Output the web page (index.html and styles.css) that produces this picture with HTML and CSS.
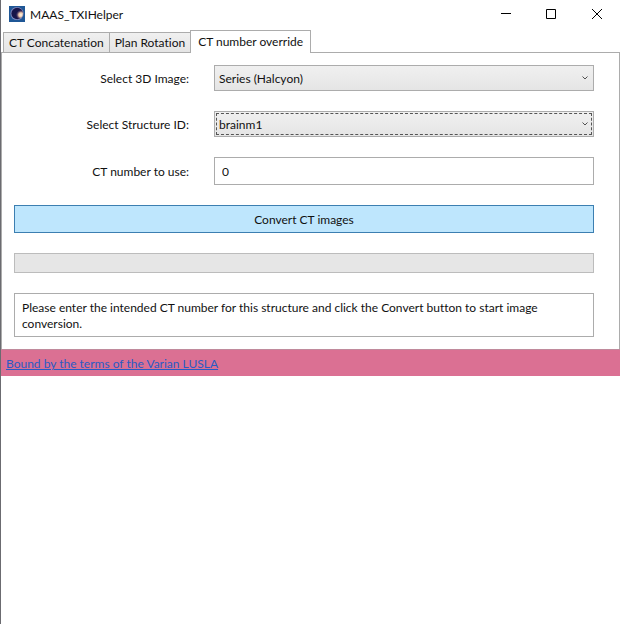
FILE: index.html
```html
<!DOCTYPE html>
<html lang="en">
<head>
<meta charset="utf-8">
<title>MAAS_TXIHelper</title>
<link rel="stylesheet" href="styles.css">
</head>
<body>
<div class="window">
  <header class="titlebar">
    <svg class="app-icon" viewBox="0 0 16 16" aria-hidden="true">
      <defs>
        <radialGradient id="glow" cx="0.82" cy="0.62" r="0.42">
          <stop offset="0" stop-color="#fff6e6"/>
          <stop offset="0.45" stop-color="#e8c4a8"/>
          <stop offset="0.75" stop-color="#5a4468"/>
          <stop offset="1" stop-color="#17154a"/>
        </radialGradient>
      </defs>
      <rect width="16" height="16" fill="#1f5796"/>
      <circle cx="8" cy="7.500" r="6.6" fill="#8088bd"/>
      <circle cx="8.2" cy="7.500" r="5.8" fill="url(#glow)"/>
    </svg>
    <h1 class="title">MAAS_TXIHelper</h1>
    <div class="window-controls">
      <button class="window-button" type="button" aria-label="Minimize">
        <svg viewBox="0 0 10 10" aria-hidden="true"><path d="M1 4.5H11"/></svg>
      </button>
      <button class="window-button" type="button" aria-label="Maximize">
        <svg viewBox="0 0 10 10" aria-hidden="true"><path d="M.5 .5H9.5V9.5H.5Z"/></svg>
      </button>
      <button class="window-button" type="button" aria-label="Close">
        <svg viewBox="0 0 10 10" aria-hidden="true"><path d="M0 0L10 10M10 0L0 10"/></svg>
      </button>
    </div>
  </header>

  <div class="tabs" role="tablist">
    <button class="tab" type="button" role="tab" aria-selected="false">CT Concatenation</button>
    <button class="tab" type="button" role="tab" aria-selected="false">Plan Rotation</button>
    <button class="tab tab-active" type="button" role="tab" aria-selected="true" id="tab-override" aria-controls="panel">CT number override</button>
  </div>

  <form class="panel" id="panel" role="tabpanel" aria-labelledby="tab-override">
    <div class="field">
      <label for="image">Select 3D Image:</label>
      <div class="combo">
        <select id="image"><option>Series (Halcyon)</option></select>
        <svg class="chevron" viewBox="0 0 6 4" aria-hidden="true"><path d="M.5 .5L3 3L5.500 .5"/></svg>
      </div>
    </div>
    <div class="field">
      <label for="structure">Select Structure ID:</label>
      <div class="combo combo-focused">
        <select id="structure"><option>brainm1</option></select>
        <svg class="chevron" viewBox="0 0 6 4" aria-hidden="true"><path d="M.5 .5L3 3L5.500 .5"/></svg>
      </div>
    </div>
    <div class="field">
      <label for="number">CT number to use:</label>
      <input class="number" id="number" type="text" value="0">
    </div>
    <button class="convert" type="button">Convert CT images</button>
    <progress class="progress" value="0" max="100" aria-label="Conversion progress"></progress>
    <textarea class="message" rows="2" readonly aria-label="Status message">Please enter the intended CT number for this structure and click the Convert button to start image conversion.</textarea>
  </form>

  <footer class="footer"><a href="#">Bound by the terms of the Varian LUSLA</a></footer>
</div>
</body>
</html>
```
FILE: styles.css
```css
* {
  box-sizing: border-box;
}

body {
  margin: 0;
  background: #fff;
}

body,
button,
input,
select,
textarea {
  color: #111;
  font-family: Lato, "Segoe UI", sans-serif;
  font-size: 12px;
  font-variant-ligatures: none;
  line-height: 16px;
}

.window {
  min-height: 100vh;
  border-left: 1px solid #6b6b70;
}

.titlebar {
  display: flex;
  align-items: flex-start;
  height: 30px;
  padding-left: 8px;
}

.app-icon {
  width: 16px;
  height: 16px;
  margin-top: 6px;
}

.title {
  flex: 1;
  margin: 7px 0 0 5px;
  font-size: 12px;
  font-weight: 400;
}

.window-controls {
  display: flex;
}

.window-button {
  display: flex;
  align-items: center;
  justify-content: center;
  width: 46px;
  height: 28px;
  padding: 0;
  border: 0;
  background: none;
}

.window-button svg {
  width: 10px;
  height: 10px;
  overflow: visible;
  fill: none;
  stroke: #000;
}

.tabs {
  display: flex;
  align-items: flex-end;
  padding-left: 2px;
}

.tab {
  height: 20px;
  margin-right: -1px;
  padding: 1px 5px 0;
  border: 1px solid #acacac;
  border-bottom: 0;
  background: linear-gradient(#f0f0f0, #e5e5e5);
}

.tab-active {
  z-index: 1;
  height: 23px;
  margin-bottom: -1px;
  padding: 0 7px;
  background: #fff;
}

.panel {
  display: flex;
  flex-direction: column;
  gap: 20px;
  padding: 12px 25px 12px 12px;
  border: 1px solid #acacac;
  border-bottom: 0;
}

.field {
  display: grid;
  grid-template-columns: 175px 1fr;
  gap: 25px;
  align-items: center;
}

.field label {
  padding-top: 1px;
  text-align: right;
}

.combo {
  position: relative;
  display: flex;
}

.combo select {
  width: 100%;
  height: 26px;
  padding: 2px 20px 0 4px;
  appearance: none;
  border: 1px solid #acacac;
  border-radius: 0;
  background: linear-gradient(#f0f0f0, #e5e5e5);
}

.combo-focused select {
  outline: 1px dashed #555;
  outline-offset: -3px;
}

.chevron {
  position: absolute;
  top: 11px;
  right: 6px;
  width: 6px;
  height: 4px;
  fill: none;
  stroke: #505050;
  pointer-events: none;
}

.number {
  width: 100%;
  height: 28px;
  padding: 0 7px;
  border: 1px solid #acacac;
}

.convert {
  height: 28px;
  padding: 2px 0 0;
  border: 1px solid #3c7fb1;
  background: #bee6fd;
}

.progress {
  width: 100%;
  height: 20px;
  appearance: none;
  border: 1px solid #bcbcbc;
  background: #e6e6e6;
}

.progress::-webkit-progress-bar {
  background: #e6e6e6;
}

.progress::-webkit-progress-value {
  background: #06b025;
}

.message {
  height: 44px;
  padding: 6px 7px 4px;
  border: 1px solid #acacac;
  overflow: hidden;
  resize: none;
}

.footer {
  padding: 6px 5px 4px;
  border-top: 1px solid #c08a9c;
  background: #db7093;
}

.footer a {
  color: #2a5bc4;
}
```
